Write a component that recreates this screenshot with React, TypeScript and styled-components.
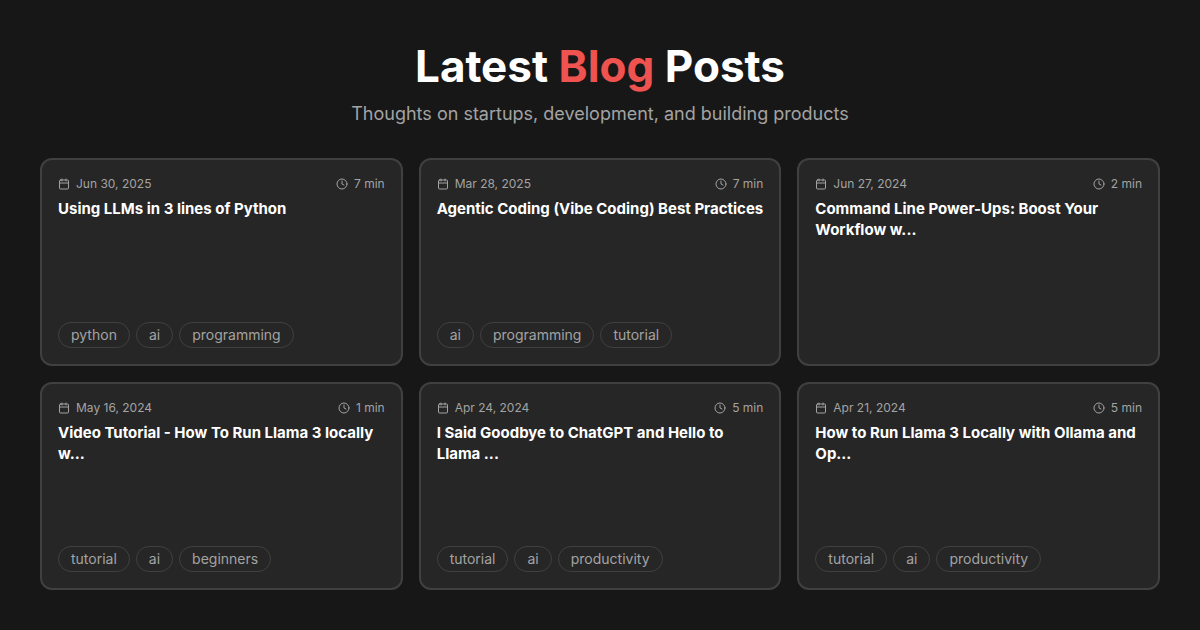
import styled, { createGlobalStyle } from 'styled-components'
import { Calendar, Clock } from 'lucide-react'

const GlobalStyle = createGlobalStyle`
  html, body {
    margin: 0;
    padding: 0;
    background: #171717;
  }
`

const Page = styled.div`
  box-sizing: border-box;
  width: 1200px;
  height: 630px;
  padding: 40px;
  background: #171717;
  font-family: Inter, "Liberation Sans", sans-serif;
  display: flex;
  flex-direction: column;
  overflow: hidden;
`

const Header = styled.header`
  text-align: center;
  margin-bottom: 30px;
`

const Title = styled.h1`
  margin: 0 0 8px;
  font-size: 44px;
  line-height: 52px;
  font-weight: 700;
  color: #ffffff;
`

const Accent = styled.span`
  color: #ef5350;
`

const Subtitle = styled.p`
  margin: 0;
  font-size: 18px;
  line-height: 28px;
  color: #a3a3a3;
`

const Grid = styled.div`
  flex: 1;
  display: grid;
  grid-template-columns: repeat(3, 1fr);
  grid-template-rows: repeat(2, 1fr);
  gap: 16px;
`

const Card = styled.article`
  box-sizing: border-box;
  display: flex;
  flex-direction: column;
  padding: 16px;
  background: #262626;
  border: 2px solid #404040;
  border-radius: 12px;
`

const Meta = styled.div`
  display: flex;
  justify-content: space-between;
  align-items: center;
  margin-bottom: 6px;
`

const MetaItem = styled.span`
  display: flex;
  align-items: center;
  gap: 6px;
  font-size: 12px;
  line-height: 16px;
  color: #a3a3a3;

  svg {
    width: 12px;
    height: 12px;
  }
`

const PostTitle = styled.h2`
  flex: 1;
  margin: 0;
  font-size: 15px;
  line-height: 21px;
  font-weight: 700;
  color: #ffffff;
`

const Tags = styled.div`
  display: flex;
  gap: 6px;
`

const Tag = styled.span`
  padding: 3px 12px;
  font-size: 14px;
  line-height: 18px;
  color: #a3a3a3;
  border: 1px solid #404040;
  border-radius: 999px;
`

const posts = [
  { date: 'Jun 30, 2025', time: '7 min', title: 'Using LLMs in 3 lines of Python', tags: ['python', 'ai', 'programming'] },
  { date: 'Mar 28, 2025', time: '7 min', title: 'Agentic Coding (Vibe Coding) Best Practices', tags: ['ai', 'programming', 'tutorial'] },
  { date: 'Jun 27, 2024', time: '2 min', title: 'Command Line Power-Ups: Boost Your Workflow w...', tags: [] },
  { date: 'May 16, 2024', time: '1 min', title: 'Video Tutorial - How To Run Llama 3 locally w...', tags: ['tutorial', 'ai', 'beginners'] },
  { date: 'Apr 24, 2024', time: '5 min', title: 'I Said Goodbye to ChatGPT and Hello to Llama ...', tags: ['tutorial', 'ai', 'productivity'] },
  { date: 'Apr 21, 2024', time: '5 min', title: 'How to Run Llama 3 Locally with Ollama and Op...', tags: ['tutorial', 'ai', 'productivity'] }
]

export default function App() {
  return (
    <Page>
      <GlobalStyle />
      <Header>
        <Title>
          Latest <Accent>Blog</Accent> Posts
        </Title>
        <Subtitle>Thoughts on startups, development, and building products</Subtitle>
      </Header>
      <Grid>
        {posts.map(post => (
          <Card key={post.title}>
            <Meta>
              <MetaItem>
                <Calendar />
                {post.date}
              </MetaItem>
              <MetaItem>
                <Clock />
                {post.time}
              </MetaItem>
            </Meta>
            <PostTitle>{post.title}</PostTitle>
            <Tags>
              {post.tags.map(tag => (
                <Tag key={tag}>{tag}</Tag>
              ))}
            </Tags>
          </Card>
        ))}
      </Grid>
    </Page>
  )
}
